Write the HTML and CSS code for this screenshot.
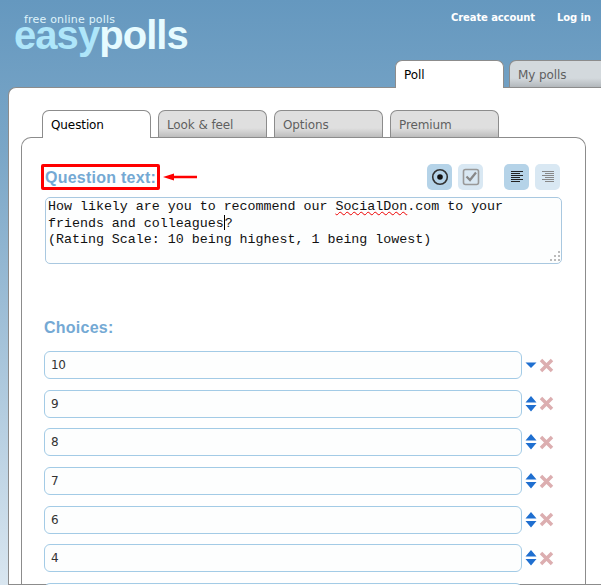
FILE: index.html
```html
<!DOCTYPE html>
<html lang="en">
<head>
<meta charset="utf-8">
<title>easypolls</title>
<link rel="stylesheet" href="styles.css">
</head>
<body>
<div class="page">
  <header class="top">
    <div class="brand">
      <div class="tagline">free online polls</div>
      <div class="logo"><span class="easy">easy</span><span class="polls">polls</span></div>
    </div>
    <div class="top-right">
      <nav class="account"><a>Create account</a><a>Log in</a></nav>
      <div class="main-tabs">
        <div class="tab tab-main active">Poll</div>
        <div class="tab tab-main tab-blue">My polls</div>
      </div>
    </div>
  </header>
  <main class="panel">
    <div class="sub-tabs">
      <div class="tab active">Question</div>
      <div class="tab">Look &amp; feel</div>
      <div class="tab">Options</div>
      <div class="tab">Premium</div>
    </div>
    <section class="card">
      <div class="q-head">
        <div class="q-label-wrap">
          <h2 class="q-label">Question text:</h2>
          <svg class="arrow" width="36" height="10" viewBox="0 0 36 10"><path d="M1 5 12 1.500 12 3.800 35 3.800 35 6.200 12 6.200 12 8.500Z" fill="#f00"/></svg>
        </div>
        <div class="tools">
          <button class="tool on"><svg width="18" height="18" viewBox="0 0 18 18"><circle cx="9" cy="9" r="7.300" fill="none" stroke="#333" stroke-width="1.600"/><circle cx="9" cy="9" r="2.800" fill="#111"/></svg></button>
          <button class="tool"><svg width="18" height="18" viewBox="0 0 18 18"><rect x="1.500" y="1.500" width="15" height="15" rx="2" fill="none" stroke="#999" stroke-width="1.600"/><path d="M4.500 8.500 8 12 14 4.500" fill="none" stroke="#888" stroke-width="2.200"/></svg></button>
          <button class="tool on gap"><svg width="14" height="12" viewBox="0 0 14 12"><path d="M1 .5H13M1 2.500H10M1 4.500H13M1 6.500H10M1 8.500H13M1 10.500H10" stroke="#222" fill="none"/></svg></button>
          <button class="tool"><svg width="14" height="12" viewBox="0 0 14 12"><path d="M1 .5H13M4 2.500H13M1 4.500H13M4 6.500H13M1 8.500H13M4 10.500H13" stroke="#888" fill="none"/></svg></button>
        </div>
      </div>
      <div class="q-text">How likely are you to recommend our <span class="typo">SocialDon</span>.com to your<br>friends and colleagues<span class="caret"></span>?<br>(Rating Scale: 10 being highest, 1 being lowest)
        <svg class="grip" width="13" height="13" viewBox="0 0 13 13"><path d="M10 1h2v2h-2zM6 5h2v2H6zM10 5h2v2h-2zM2 9h2v2H2zM6 9h2v2H6zM10 9h2v2h-2z" fill="#bbb"/></svg>
      </div>
      <h2 class="c-label">Choices:</h2>
      <div class="choices">
        <div class="choice"><input class="c-input" value="10"><span class="move"><svg width="12" height="14" viewBox="0 0 12 14"><path d="M.5 4.500H11.500L6 10Z" fill="#1f6fd0"/></svg></span><svg class="del" width="15" height="15" viewBox="0 0 15 15"><path d="M2 2 13 13M13 2 2 13" stroke="#dcaeb0" stroke-width="3.500"/></svg></div>
        <div class="choice"><input class="c-input" value="9"><span class="move"><svg width="12" height="16" viewBox="0 0 12 16"><path d="M6 0 11.500 6.500H.5ZM.5 9H11.500L6 15.500Z" fill="#1f6fd0"/></svg></span><svg class="del" width="15" height="15" viewBox="0 0 15 15"><path d="M2 2 13 13M13 2 2 13" stroke="#dcaeb0" stroke-width="3.500"/></svg></div>
        <div class="choice"><input class="c-input" value="8"><span class="move"><svg width="12" height="16" viewBox="0 0 12 16"><path d="M6 0 11.500 6.500H.5ZM.5 9H11.500L6 15.500Z" fill="#1f6fd0"/></svg></span><svg class="del" width="15" height="15" viewBox="0 0 15 15"><path d="M2 2 13 13M13 2 2 13" stroke="#dcaeb0" stroke-width="3.500"/></svg></div>
        <div class="choice"><input class="c-input" value="7"><span class="move"><svg width="12" height="16" viewBox="0 0 12 16"><path d="M6 0 11.500 6.500H.5ZM.5 9H11.500L6 15.500Z" fill="#1f6fd0"/></svg></span><svg class="del" width="15" height="15" viewBox="0 0 15 15"><path d="M2 2 13 13M13 2 2 13" stroke="#dcaeb0" stroke-width="3.500"/></svg></div>
        <div class="choice"><input class="c-input" value="6"><span class="move"><svg width="12" height="16" viewBox="0 0 12 16"><path d="M6 0 11.500 6.500H.5ZM.5 9H11.500L6 15.500Z" fill="#1f6fd0"/></svg></span><svg class="del" width="15" height="15" viewBox="0 0 15 15"><path d="M2 2 13 13M13 2 2 13" stroke="#dcaeb0" stroke-width="3.500"/></svg></div>
        <div class="choice"><input class="c-input" value="4"><span class="move"><svg width="12" height="16" viewBox="0 0 12 16"><path d="M6 0 11.500 6.500H.5ZM.5 9H11.500L6 15.500Z" fill="#1f6fd0"/></svg></span><svg class="del" width="15" height="15" viewBox="0 0 15 15"><path d="M2 2 13 13M13 2 2 13" stroke="#dcaeb0" stroke-width="3.500"/></svg></div>
        <div class="choice"><input class="c-input" value=""></div>
      </div>
    </section>
  </main>
</div>
</body>
</html>
```
FILE: styles.css
```css
html, body { margin: 0; padding: 0; height: 100%; overflow: hidden; }
body { font-family: "DejaVu Sans", sans-serif; }
.page {
  width: 601px; height: 585px; overflow: hidden;
  background: linear-gradient(180deg, #6598bf 0%, #7aa6c7 150px, #d9e6f0 585px);
}
.top { height: 87px; display: flex; justify-content: space-between; box-sizing: border-box; }
.brand { padding: 13px 0 0 14px; }
.tagline { color: #dff3fb; font-size: 11px; line-height: 13px; letter-spacing: .2px; padding-left: 10px; position: relative; z-index: 1; }
.logo { font-family: "Liberation Sans", sans-serif; font-weight: 700; font-size: 40px; line-height: 40px; letter-spacing: -.95px; margin-top: -11px; }
.easy { color: #aee6fa; }
.polls { color: #e6fbff; }
.top-right { width: 206px; flex: none; }
.account { display: flex; gap: 22px; padding: 11px 0 0 56px; height: 60px; box-sizing: border-box; }
.account a { color: #fff; font-size: 10px; font-weight: 700; line-height: 13px; white-space: nowrap; letter-spacing: -.1px; }
.tab {
  width: 109px; height: 27px; box-sizing: border-box; flex: none;
  border: 1px solid #8c8c8c; border-bottom: 0; border-radius: 7px 7px 0 0;
  background: linear-gradient(180deg, #dfdfdf 0, #dfdfdf 17px, #bdbdbd 100%);
  color: #5f5f5f; font-size: 12px; line-height: 26px; padding: 1px 0 0 8px; letter-spacing: -.1px;
}
.tab.active { background: #fff; color: #000; position: relative; z-index: 1; }
.main-tabs { display: flex; gap: 5px; width: 240px; height: 27px; }
.tab-main { height: 27px; }
.tab-main.active { height: 28px; }
.tab-blue { background: linear-gradient(180deg, #d3d9dd 0, #d3d9dd 17px, #b3b8bc 100%); }
.panel {
  margin-left: 8px; width: 640px; height: 498px; box-sizing: border-box;
  border: 1px solid #8c8c8c; border-right: 0; border-radius: 8px 0 0 0;
  background: #fff; padding: 22px 0 0 12px;
}
.sub-tabs { display: flex; gap: 7px; padding-left: 21px; position: relative; margin-bottom: -1px; height: 28px; }
.sub-tabs .tab.active { height: 28px; }
.card {
  width: 565px; height: 470px; box-sizing: border-box;
  border: 1px solid #8c8c8c; border-bottom: 0; border-radius: 10px 10px 0 0;
  padding: 26px 0 0 22px;
}
.q-head { display: flex; justify-content: space-between; width: 516px; height: 33px; }
.q-label-wrap { display: flex; align-items: center; height: 26px; margin-left: -3px; }
.q-label {
  margin: 0; font-size: 16px; font-weight: 700; color: #74a9d4;
  font-family: "Liberation Sans", sans-serif; letter-spacing: .25px; line-height: 22px; height: 26px;
  border: 3px solid #f00; border-radius: 2px; padding: 0 1px; white-space: nowrap; width: 119px; box-sizing: border-box;
}
.arrow { margin-left: 2px; }
.tools { display: flex; gap: 6px; }
.tool {
  width: 25px; height: 26px; padding: 0; border: 0; border-radius: 5px;
  background: #d9e8f3; display: flex; align-items: center; justify-content: center;
}
.tool.on { background: #b5d3e8; }
.tool.gap { margin-left: 15px; }
.q-text {
  width: 517px; height: 67px; box-sizing: border-box; margin-left: 1px; position: relative;
  border: 1px solid #a9c8e0; border-radius: 5px; background: #fdfefe;
  font-family: "Liberation Mono", monospace; font-size: 13.333px; line-height: 16px; letter-spacing: -.015px;
  color: #111; padding: 1px 2px;
}
.typo { text-decoration: underline wavy #e00; text-decoration-thickness: 1px; }
.caret { display: inline-block; width: 0; height: 15px; border-left: 1px solid #000; vertical-align: -3px; }
.grip { position: absolute; right: 0; bottom: 0; }
.c-label {
  margin: 54px 0 0 0; font-size: 16px; font-weight: 700; color: #74a9d4; line-height: 20px;
  font-family: "Liberation Sans", sans-serif; letter-spacing: .25px;
}
.choices { display: flex; flex-direction: column; gap: 10.7px; margin-top: 13px; }
.choice { display: flex; align-items: center; height: 28px; }
.c-input {
  width: 478px; height: 28px; box-sizing: border-box; flex: none;
  border: 1px solid #a3cbe6; border-radius: 6px; background: #fdfefe; outline: 0;
  font-family: "DejaVu Sans", sans-serif; font-size: 12px; letter-spacing: -.3px; color: #333; padding: 0 6px; margin: 0;
}
.move { width: 12px; margin-left: 3px; display: flex; align-items: center; }
.del { margin-left: 2px; }
```
